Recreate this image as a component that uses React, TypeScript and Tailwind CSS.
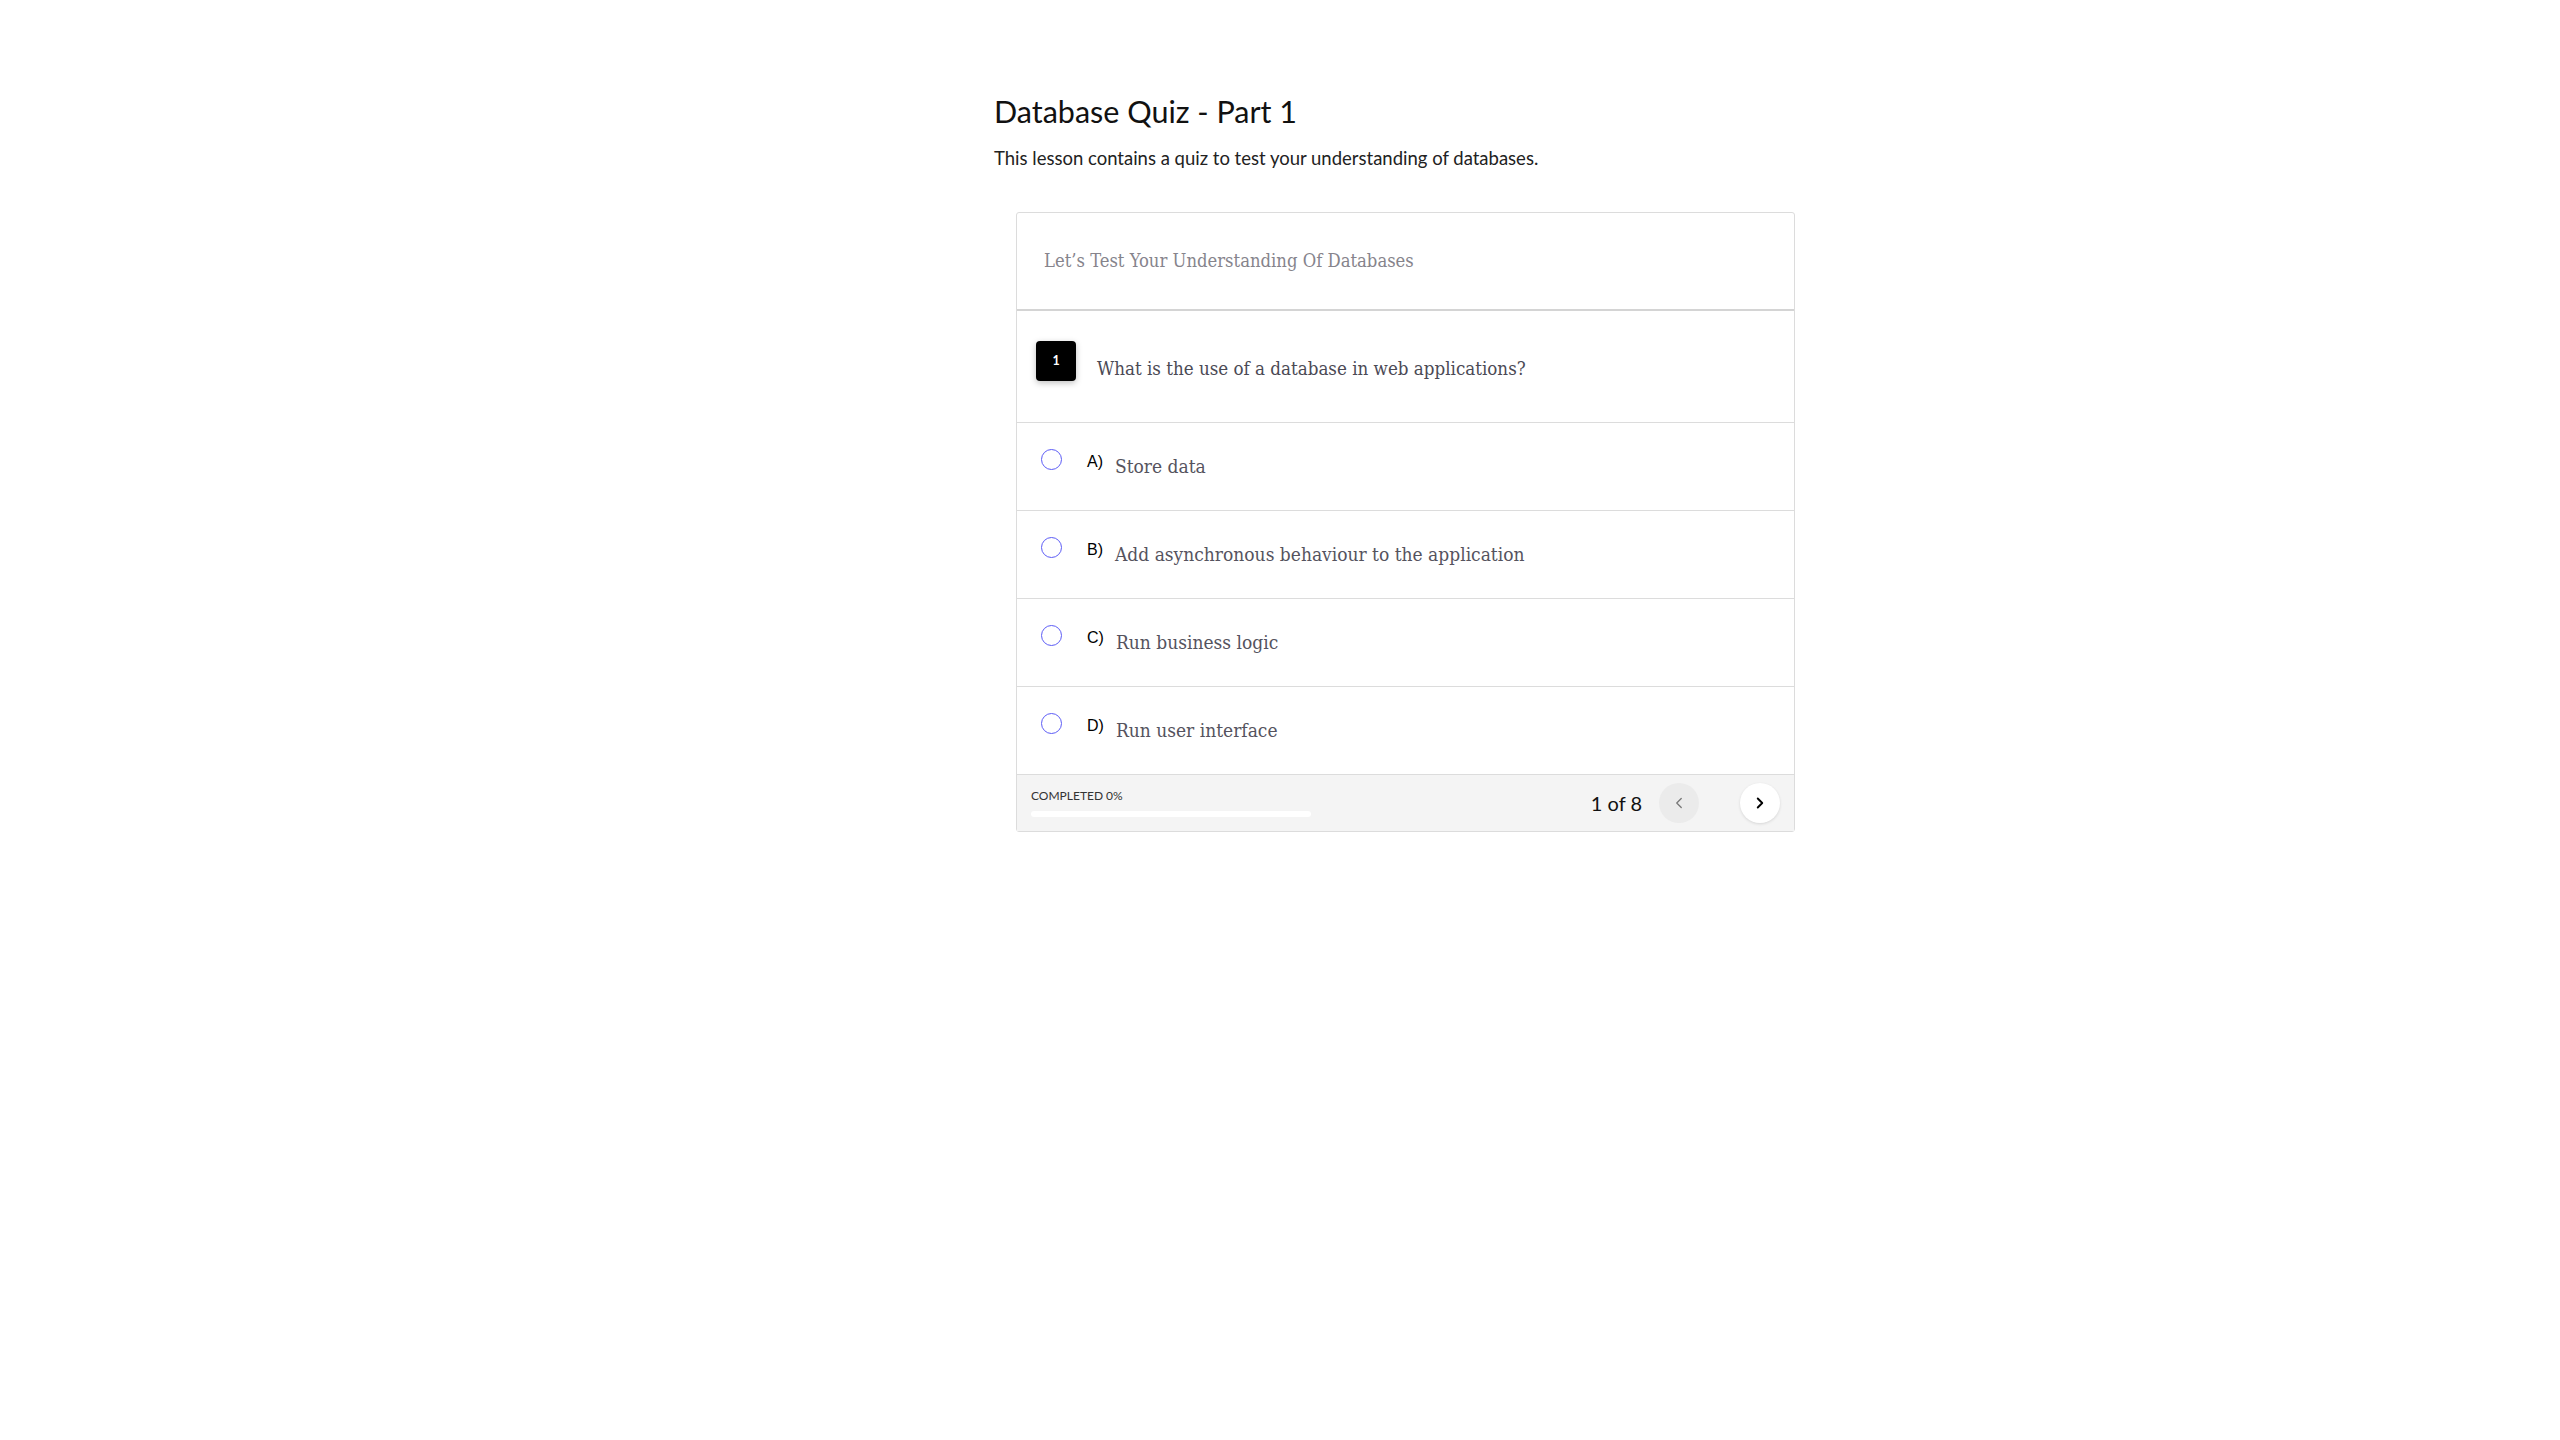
import { ChevronLeft, ChevronRight } from 'lucide-react';

const options = [
  { key: 'A', text: 'Store data' },
  { key: 'B', text: 'Add asynchronous behaviour to the application' },
  { key: 'C', text: 'Run business logic' },
  { key: 'D', text: 'Run user interface' },
];

const sans = "font-['Lato','Noto_Sans',sans-serif]";
const serif = "font-['DejaVu_Serif','Liberation_Serif',serif] font-stretch-condensed";

export default function App() {
  return (
    <div className={`min-h-screen bg-white pl-[994px] pt-[92px] ${sans}`}>
      {/* 제목 */}
      <h1 className="text-[30.5px] leading-[38px] text-[#111]">Database Quiz - Part 1</h1>
      <p className="mt-[17px] text-[18.5px] leading-[22px] text-[#222]">
        This lesson contains a quiz to test your understanding of databases.
      </p>

      {/* 퀴즈 카드 */}
      <div className="mt-[43px] ml-[22px] w-[779px] rounded-[3px] border border-[#dcdcdc] bg-white">
        <div className="flex h-[98px] items-center border-b-2 border-[#d4d4d4] pl-[27px]">
          <span className={`${serif} text-[18.3px] text-[#86848c]`}>
            Let’s Test Your Understanding Of Databases
          </span>
        </div>

        <div className="flex h-[112px] items-start border-b border-[#dcdcdc] pl-[19px] pt-[30px]">
          <div className="flex h-[40px] w-[40px] items-center justify-center rounded-[4px] bg-black text-[12.5px] font-bold text-white shadow-[0_2px_6px_rgba(0,0,0,0.25)]">
            1
          </div>
          <span className={`${serif} ml-[21px] mt-[15px] text-[18.6px] leading-[26px] text-[#4b4a55]`}>
            What is the use of a database in web applications?
          </span>
        </div>

        {options.map((o) => (
          <div key={o.key} className="flex h-[88px] items-start border-b border-[#dcdcdc] pl-[24px] pt-[26px]">
            <div className="h-[21px] w-[21px] rounded-full border-[1.5px] border-[#5c5cf6]" />
            <span className="ml-[25px] mt-[5px] font-['Liberation_Sans',Arial,sans-serif] text-[16px] leading-none text-black">
              {o.key})
            </span>
            <span className={`${serif} ml-[12px] mt-[8px] text-[19px] leading-none text-[#55535e]`}>{o.text}</span>
          </div>
        ))}

        {/* 하단 진행 표시 */}
        <div className="flex h-[56px] items-center justify-between bg-[#f4f4f4] pl-[14px] pr-[14px]">
          <div className="flex flex-col">
            <span className="text-[12px] leading-[14px] text-[#333]">COMPLETED 0%</span>
            <div className="mt-[8px] h-[6px] w-[280px] rounded-full bg-white" />
          </div>
          <div className="flex items-center">
            <span className="text-[20px] text-[#111]">1 of 8</span>
            <button className="ml-[17px] flex h-[40px] w-[40px] items-center justify-center rounded-full bg-[#ebebeb]">
              <ChevronLeft size={18} strokeWidth={1.75} className="text-[#777]" />
            </button>
            <button className="ml-[41px] flex h-[40px] w-[40px] items-center justify-center rounded-full bg-white shadow-[0_1px_3px_rgba(0,0,0,0.12)]">
              <ChevronRight size={18} strokeWidth={2.5} className="text-black" />
            </button>
          </div>
        </div>
      </div>
    </div>
  );
}
